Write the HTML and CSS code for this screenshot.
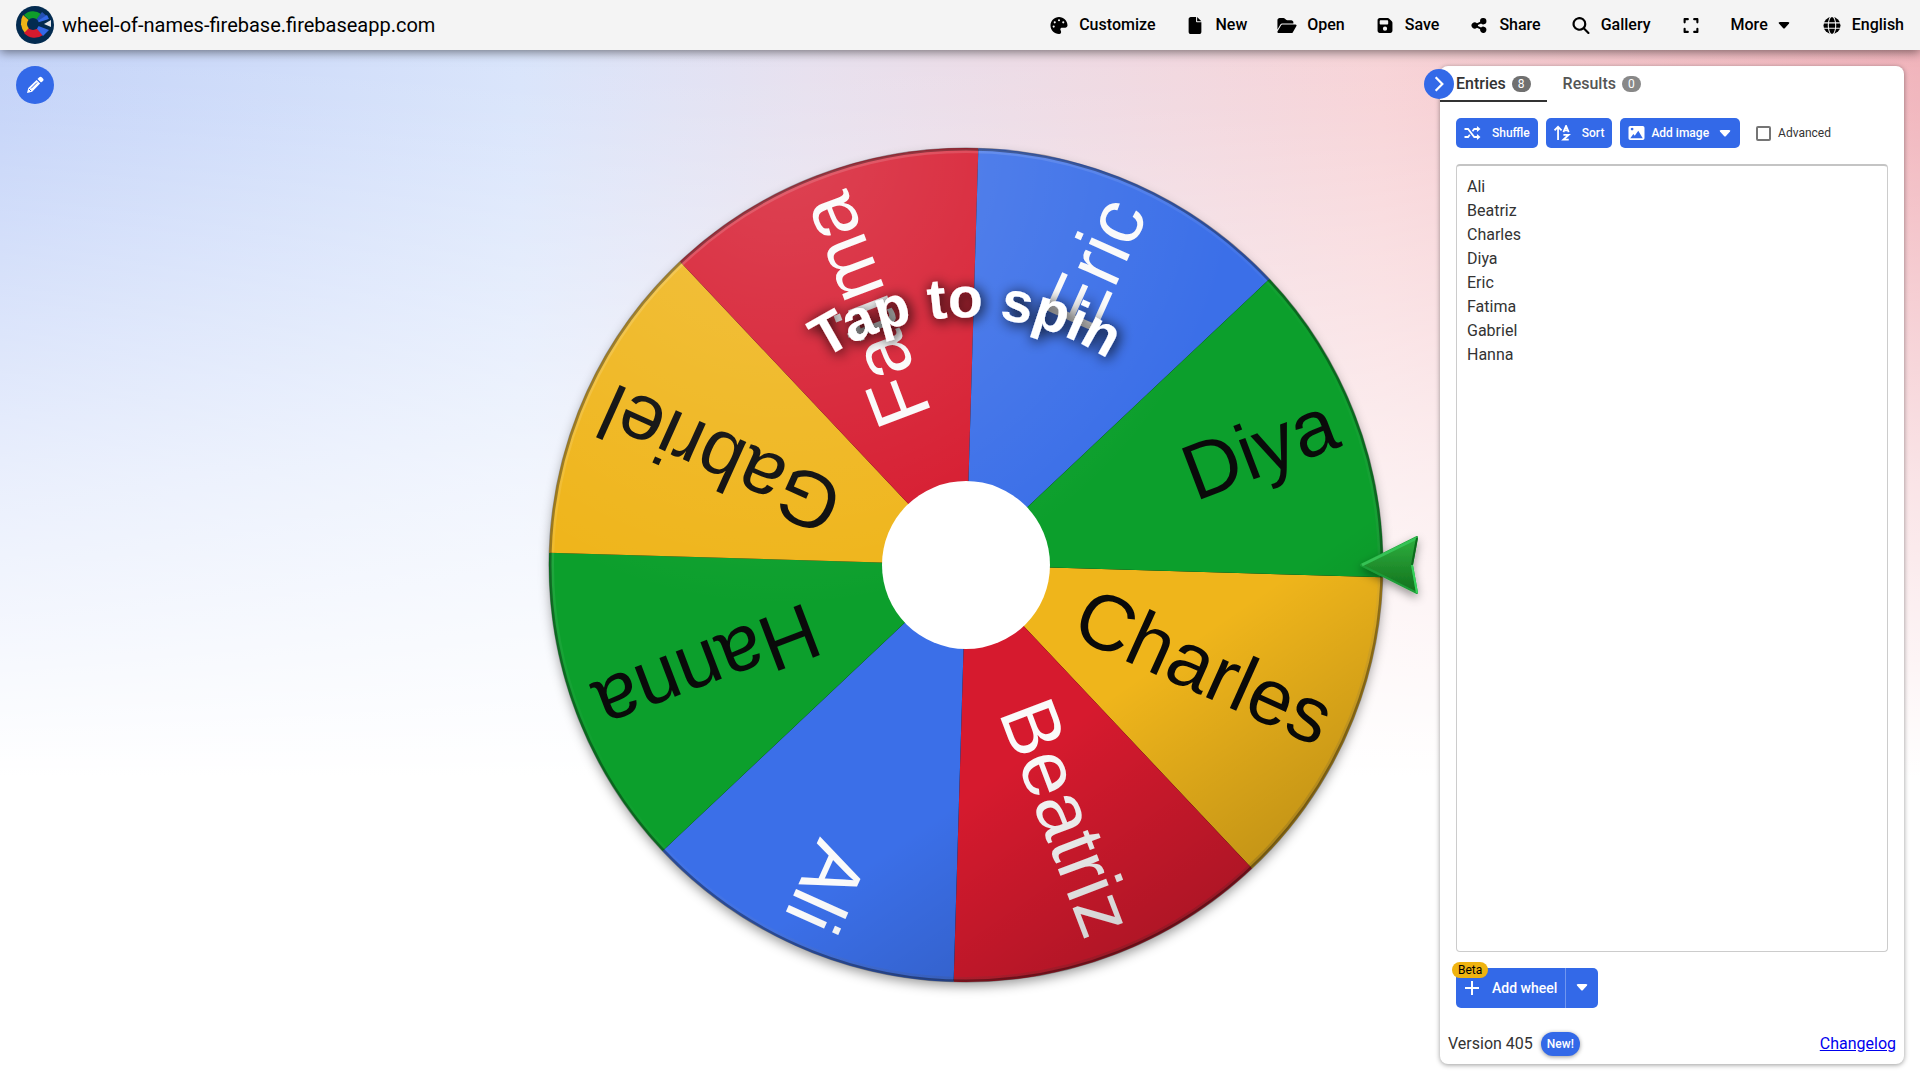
FILE: index.html
```html
<!DOCTYPE html>
<html lang="en">
<head>
  <meta charset="UTF-8">
  <meta name="viewport" content="width=device-width, initial-scale=1.0">
  <title>Wheel of Names</title>
  <link rel="stylesheet" href="styles.css">
</head>
<body>
  <header class="toolbar">
    <a class="brand" href="#">
      <svg class="logo" viewBox="0 0 38 38" aria-hidden="true">
        <circle cx="19" cy="19" r="19" fill="#032b50"/>
        <path d="M17 18 L8 9 A13 13 0 0 1 25 8 Z" fill="#0f9d2a"/>
        <path d="M17 18 L9 27 A15 15 0 0 1 7 9 Z" fill="#efb417"/>
        <path d="M17 18 L8 27 A14 14 0 0 0 27 29 Z" fill="#d61a2e"/>
        <path d="M17 18 L26 6 L32 11 Z" fill="#2450b5"/>
        <path d="M17 18 L31 9 L33 13 Z" fill="#3369e8"/>
        <path d="M17 18 L33 24 L27 30 Z" fill="#3369e8"/>
        <circle cx="17" cy="18" r="6" fill="#032b50"/>
        <path d="M24 18 L35 12 V24 Z" fill="#032b50"/>
        <path d="M28 18 L35 14 V21 Z" fill="#e4e6ea"/>
      </svg>
      <span>wheel-of-names-firebase.firebaseapp.com</span>
    </a>
    <nav class="menu">
      <button class="menu-btn" type="button">
        <svg class="icon" viewBox="0 0 512 512"><path d="M512 256c0 .9 0 1.800 0 2.700c-.4 36.500-33.600 61.300-70.100 61.300H344c-26.500 0-48 21.500-48 48c0 3.400 .4 6.700 1 9.900c2.100 10.200 6.500 20 10.800 29.900c6.100 13.800 12.100 27.500 12.100 42c0 31.800-21.600 60.700-53.400 62c-3.500 .1-7 .2-10.600 .2C114.600 512 0 397.400 0 256S114.600 0 256 0S512 114.600 512 256zM128 288a32 32 0 1 0-64 0 32 32 0 1 0 64 0zm0-96a32 32 0 1 0 0-64 32 32 0 1 0 0 64zM288 96a32 32 0 1 0-64 0 32 32 0 1 0 64 0zm96 96a32 32 0 1 0 0-64 32 32 0 1 0 0 64z"/></svg>
        Customize
      </button>
      <button class="menu-btn" type="button">
        <svg class="icon" viewBox="0 0 384 512"><path d="M0 64C0 29 29 0 64 0H224V128c0 18 14 32 32 32H384V448c0 35-29 64-64 64H64c-35 0-64-29-64-64V64zM384 128H256V0L384 128z"/></svg>
        New
      </button>
      <button class="menu-btn" type="button">
        <svg class="icon" viewBox="0 0 576 512"><path d="M88 224 0 376V96c0-35 29-64 64-64h118c17 0 33 7 45 19l26 26c12 12 28 19 45 19h118c35 0 64 29 64 64v32H144c-23 0-44 12-56 32zm28 16c6-10 16-16 28-16h400c12 0 22 6 28 16s6 22 0 32L460 464c-6 10-16 16-28 16H32c-12 0-22-6-28-16s-6-22 0-32z"/></svg>
        Open
      </button>
      <button class="menu-btn" type="button">
        <svg class="icon" viewBox="0 0 448 512"><path fill-rule="evenodd" d="M64 32C29 32 0 61 0 96v320c0 35 29 64 64 64h320c35 0 64-29 64-64V174c0-17-7-33-19-45l-78-78c-12-12-28-19-45-19zm0 96c0-18 14-32 32-32h192c18 0 32 14 32 32v64c0 18-14 32-32 32H96c-18 0-32-14-32-32zM224 288a64 64 0 1 1 0 128 64 64 0 0 1 0-128z"/></svg>
        Save
      </button>
      <button class="menu-btn" type="button">
        <svg class="icon" viewBox="0 0 448 512"><path d="M352 224a96 96 0 1 0-95-84l-94 47a96 96 0 1 0 0 138l94 47a96 96 0 1 0 29-57l-94-47a96 96 0 0 0 0-24l94-47c17 17 40 27 66 27z"/></svg>
        Share
      </button>
      <button class="menu-btn" type="button">
        <svg class="icon" viewBox="0 0 512 512"><path d="M416 208c0 46-15 88-40 123l127 126c12 13 12 33 0 46s-33 12-46 0L331 376a208 208 0 1 1 85-168zM208 352a144 144 0 1 0 0-288 144 144 0 1 0 0 288z"/></svg>
        Gallery
      </button>
      <button class="menu-btn" type="button" aria-label="Fullscreen">
        <svg class="icon" viewBox="0 0 448 512"><path d="M32 32C14 32 0 46 0 64v96a32 32 0 0 0 64 0V96h64a32 32 0 0 0 0-64zM64 352a32 32 0 0 0-64 0v96c0 18 14 32 32 32h96a32 32 0 0 0 0-64H64zM320 32a32 32 0 0 0 0 64h64v64a32 32 0 0 0 64 0V64c0-18-14-32-32-32zM448 352a32 32 0 0 0-64 0v64h-64a32 32 0 0 0 0 64h96c18 0 32-14 32-32z"/></svg>
      </button>
      <button class="menu-btn menu-more" type="button">
        More
        <svg class="caret" viewBox="0 0 20 16"><path d="M6 5h8q2 0 1 1.500l-4 4.500q-1 1-2 0l-4-4.500Q4 5 6 5z"/></svg>
      </button>
      <button class="menu-btn" type="button">
        <svg class="icon" viewBox="0 0 16 16"><circle cx="8" cy="8" r="8"/><g fill="none" stroke="#f4f4f4"><ellipse cx="8" cy="8" rx="3.500" ry="8.500"/><path d="M0 5.500h16M0 10.500h16"/></g></svg>
        English
      </button>
    </nav>
  </header>

  <main class="page">
    <button class="round-btn edit-btn" type="button" aria-label="Edit title">
      <svg viewBox="0 0 18 18"><path d="M11.500 3 13 1.500a2 2 0 0 1 3 0l.7.7a2 2 0 0 1 0 3L15 6.500zM10.600 4l3.500 3.500-8 8.200L1 17l1.300-5z"/><path d="M5 12.500 11 6.500M3 13l2 2" stroke="#3369e8" fill="none"/></svg>
    </button>

    <section class="stage">
      <svg class="wheel" viewBox="-458 -458 916 916" role="img" aria-label="Tap to spin">
        <defs>
          <radialGradient id="light" cx="0.280" cy="0" r="0.550">
            <stop offset="0" stop-color="#fff" stop-opacity="0.180"/>
            <stop offset="1" stop-color="#fff" stop-opacity="0"/>
          </radialGradient>
          <linearGradient id="shade" x1="0.250" y1="0.100" x2="0.800" y2="0.900">
            <stop offset="0.720" stop-color="#000" stop-opacity="0"/>
            <stop offset="1" stop-color="#000" stop-opacity="0.180"/>
          </linearGradient>
          <linearGradient id="rim" x1="0.200" y1="0" x2="0.800" y2="1">
            <stop offset="0" stop-color="#fff" stop-opacity="0.180"/>
            <stop offset="0.500" stop-color="#fff" stop-opacity="0"/>
            <stop offset="1" stop-color="#000" stop-opacity="0.200"/>
          </linearGradient>
          <linearGradient id="arrow" x1="0" y1="0" x2="0" y2="1">
            <stop offset="0" stop-color="#2fb03f"/>
            <stop offset="1" stop-color="#11701c"/>
          </linearGradient>
          <filter id="drop" x="-10%" y="-10%" width="120%" height="120%">
            <feDropShadow dx="0" dy="5" stdDeviation="6" flood-color="#000" flood-opacity="0.400"/>
          </filter>
          <filter id="arrow-drop" x="-50%" y="-50%" width="200%" height="200%">
            <feDropShadow dx="0" dy="4" stdDeviation="5" flood-color="#000" flood-opacity="0.400"/>
          </filter>
          <filter id="text-drop" x="-20%" y="-30%" width="140%" height="160%">
            <feDropShadow dx="2" dy="2" stdDeviation="7" flood-color="#000" flood-opacity="1"/>
          </filter>
          <path id="slice" d="M0 0H417A417 417 0 0 1 294.900 294.900Z"/>
          <path id="arc" d="M-258 -20A260 260 0 0 1 258 -20"/>
        </defs>
        <circle r="416" filter="url(#drop)"/>
        <g transform="rotate(1.700)">
          <use href="#slice" fill="#efb51b"/>
          <use href="#slice" fill="#d61a2e" transform="rotate(45)"/>
          <use href="#slice" fill="#3b6fe8" transform="rotate(90)"/>
          <use href="#slice" fill="#0c9f2c" transform="rotate(135)"/>
          <use href="#slice" fill="#efb51b" transform="rotate(180)"/>
          <use href="#slice" fill="#d61a2e" transform="rotate(225)"/>
          <use href="#slice" fill="#3b6fe8" transform="rotate(270)"/>
          <use href="#slice" fill="#0c9f2c" transform="rotate(315)"/>
        </g>
        <g class="names">
          <text class="dark" x="395" dy="0.280em" transform="rotate(24.200)">Charles</text>
          <text x="395" dy="0.280em" transform="rotate(69.200)">Beatriz</text>
          <text x="395" dy="0.280em" transform="rotate(114.200)">Ali</text>
          <text class="dark" x="395" dy="0.280em" transform="rotate(159.200)">Hanna</text>
          <text class="dark" x="395" dy="0.280em" transform="rotate(204.200)">Gabriel</text>
          <text x="395" dy="0.280em" transform="rotate(249.200)">Fatima</text>
          <text x="395" dy="0.280em" transform="rotate(294.200)">Eric</text>
          <text class="dark" x="395" dy="0.280em" transform="rotate(339.200)">Diya</text>
        </g>
        <circle r="417" fill="url(#light)"/>
        <circle r="417" fill="url(#shade)"/>
        <circle r="414" fill="none" stroke="url(#rim)" stroke-width="4"/>
        <circle r="416" fill="none" stroke="#000" stroke-opacity="0.350" stroke-width="3"/>
        <circle r="84" fill="#fff"/>
        <g filter="url(#text-drop)">
          <text class="tap"><textPath href="#arc" startOffset="50%">Tap to spin</textPath></text>
        </g>
        <g filter="url(#arrow-drop)">
          <path d="M395 0 451 -28 446 0 451 28Z" fill="url(#arrow)" stroke="#1f9c38" stroke-width="2" stroke-linejoin="round"/>
          <path d="M396 0 451 -27" stroke="#35c254" stroke-width="3"/>
          <path d="M451 -27 446 0" stroke="#0c6a1c" stroke-width="2"/>
          <path d="M446 0 451 28" stroke="#35d25a" stroke-width="2"/>
        </g>
      </svg>
    </section>

    <aside class="panel">
      <button class="round-btn collapse-btn" type="button" aria-label="Hide panel">
        <svg viewBox="0 0 18 18"><path d="M6 3l6 6-6 6" fill="none" stroke="#fff" stroke-width="2"/></svg>
      </button>
      <div class="tabs" role="tablist">
        <button class="tab active" type="button" role="tab">Entries <span class="count">8</span></button>
        <button class="tab" type="button" role="tab">Results <span class="count">0</span></button>
      </div>
      <div class="actions">
        <button class="btn" type="button">
          <svg class="btn-icon" viewBox="0 0 18 18" fill="none" stroke="#fff" stroke-width="2"><path d="M0 4.500h4l7 9h4M0 13.500h4l2-2.500M9 7l2-2.500h4"/><path d="M14 1l4 3.500L14 8zM14 10l4 3.500L14 17z" fill="#fff" stroke="none"/></svg>
          Shuffle
        </button>
        <button class="btn" type="button">
          <svg class="btn-icon" viewBox="0 0 18 18" fill="none" stroke="#fff" stroke-width="2"><path d="M4 17V2M0 6l4-4 4 4M10 8l3-7 3 7M11 6h4M10 11h6l-6 5.500h6"/></svg>
          Sort
        </button>
        <button class="btn btn-image" type="button">
          <svg class="btn-icon" viewBox="0 0 18 18"><path fill="#fff" fill-rule="evenodd" d="M2 1h14q2 0 2 2v12q0 2-2 2H2q-2 0-2-2V3q0-2 2-2zm2 2a1.500 1.500 0 1 0 .1 0zM2 15h14l-5-8.500L7 12 5.500 10z"/></svg>
          Add image
          <svg class="caret" viewBox="0 0 20 16"><path d="M6 5h8q2 0 1 1.500l-4 4.500q-1 1-2 0l-4-4.500Q4 5 6 5z"/></svg>
        </button>
        <label class="advanced"><input type="checkbox"> Advanced</label>
      </div>
      <textarea class="entries" aria-label="Entries" spellcheck="false">Ali
Beatriz
Charles
Diya
Eric
Fatima
Gabriel
Hanna</textarea>
      <div class="add-wheel">
        <button class="add-btn" type="button">
          <svg class="plus" viewBox="0 0 16 16"><path d="M8 1v14M1 8h14" stroke="#fff" stroke-width="2"/></svg>
          Add wheel
        </button>
        <button class="add-more" type="button" aria-label="More wheels">
          <svg class="caret" viewBox="0 0 20 16"><path d="M6 5h8q2 0 1 1.500l-4 4.500q-1 1-2 0l-4-4.500Q4 5 6 5z"/></svg>
        </button>
        <span class="beta">Beta</span>
      </div>
      <footer class="version">
        <span>Version 405</span>
        <span class="new">New!</span>
        <a href="#">Changelog</a>
      </footer>
    </aside>
  </main>
</body>
</html>
```

FILE: styles.css
```css
* {
  box-sizing: border-box;
}
body {
  margin: 0;
  min-height: 100vh;
  display: flex;
  flex-direction: column;
  font-family: Roboto, sans-serif;
  font-size: 16px;
  line-height: 24px;
  color: #333;
  background:
    linear-gradient(to bottom, rgba(255, 255, 255, 0) 0, rgba(255, 255, 255, 0.1) 10%, rgba(255, 255, 255, 0.65) 44%, #fff 72%),
    linear-gradient(to right, #c1d1f8 0, #d7e3fb 27%, #e6dfee 42%, #f7d1d5 72%, #f0b0b8 100%);
}
button {
  border: 0;
  padding: 0;
  font: inherit;
  font-weight: 500;
  background: none;
  cursor: pointer;
}
.toolbar {
  height: 50px;
  padding: 0 16px;
  display: flex;
  align-items: center;
  justify-content: space-between;
  background: #f4f4f4;
  box-shadow: 0 2px 10px rgba(0, 0, 0, 0.5);
  color: #000;
  z-index: 1;
}
.brand {
  display: flex;
  align-items: center;
  gap: 8px;
  font-size: 20px;
  color: #000;
  text-decoration: none;
}
.logo {
  width: 38px;
  height: 38px;
}
.menu {
  display: flex;
  gap: 28px;
}
.menu-btn {
  display: flex;
  align-items: center;
  gap: 8px;
  color: #000;
}
.menu-more {
  gap: 6px;
  margin-right: -2px;
}
.icon {
  width: 24px;
  height: 17px;
}
.caret {
  width: 20px;
  height: 16px;
  fill: currentColor;
}
.page {
  flex: 1;
  display: flex;
  align-items: stretch;
  padding: 16px;
  gap: 16px;
}
.round-btn {
  display: flex;
  align-items: center;
  justify-content: center;
  border-radius: 50%;
  background: #3369e8;
}
.round-btn svg {
  width: 18px;
  height: 18px;
  fill: #fff;
}
.edit-btn {
  width: 38px;
  height: 38px;
}
.stage {
  flex: 1;
  display: flex;
  align-items: center;
  justify-content: flex-end;
}
.wheel {
  width: 916px;
  max-width: 100%;
  overflow: visible;
}
.names text {
  font-family: "Liberation Sans", sans-serif;
  font-size: 79px;
  text-anchor: end;
  fill: #fafafa;
}
.names .dark {
  fill: #0a0a0a;
}
.tap {
  font-family: "Liberation Sans", sans-serif;
  font-size: 57px;
  font-weight: bold;
  text-anchor: middle;
  fill: #fff;
}
.panel {
  position: relative;
  width: 464px;
  display: flex;
  flex-direction: column;
  background: #fff;
  border-radius: 8px;
  box-shadow: 0 1px 5px rgba(0, 0, 0, 0.4);
}
.collapse-btn {
  position: absolute;
  left: -16px;
  top: 3px;
  width: 30px;
  height: 30px;
}
.collapse-btn svg {
  width: 20px;
  height: 20px;
}
.tabs {
  display: flex;
}
.tab {
  height: 36px;
  padding: 2px 16px 0;
  display: flex;
  align-items: center;
  gap: 6px;
  color: #555;
  border-bottom: 2px solid transparent;
}
.tab.active {
  color: #333;
  border-color: #333;
}
.count {
  padding: 0 6px;
  border-radius: 8px;
  font-size: 12px;
  font-weight: 400;
  line-height: 16px;
  color: #fff;
  background: #888;
}
.active .count {
  background: #707070;
}
.actions {
  display: flex;
  align-items: center;
  gap: 8px;
  padding: 16px;
}
.btn {
  height: 30px;
  padding: 0 8px;
  display: flex;
  align-items: center;
  gap: 11px;
  border-radius: 5px;
  background: #3369e8;
  color: #fff;
  font-size: 12px;
}
.btn-image {
  gap: 6px;
  padding-right: 5px;
}
.btn-icon {
  width: 17px;
  height: 16px;
}
.plus {
  width: 16px;
  height: 16px;
}
.advanced {
  display: flex;
  align-items: center;
  gap: 7px;
  padding-left: 8px;
  font-size: 12px;
}
.advanced input {
  appearance: none;
  width: 15px;
  height: 15px;
  margin: 0;
  border: 2px solid #757575;
  border-radius: 2px;
}
.entries {
  flex: 1;
  margin: 0 16px;
  padding: 9px 10px;
  border: 1px solid #ccc;
  border-top: 2px solid #c4c4c4;
  border-radius: 4px;
  outline: 0;
  resize: none;
  font: inherit;
  color: #333;
}
.add-wheel {
  position: relative;
  align-self: flex-start;
  display: flex;
  margin: 16px;
  height: 40px;
  border-radius: 5px;
  background: #3369e8;
}
.add-btn {
  display: flex;
  align-items: center;
  gap: 12px;
  padding: 0 8px;
  font-size: 14px;
  color: #fff;
}
.add-more {
  padding: 4px 6px 0;
  border-left: 1px solid #7096ef;
  color: #fff;
}
.beta {
  position: absolute;
  left: -4px;
  top: -6px;
  padding: 0 6px;
  border-radius: 8px;
  font-size: 12px;
  line-height: 16px;
  color: #000;
  background: #efb310;
}
.version {
  display: flex;
  align-items: center;
  gap: 8px;
  padding: 8px;
}
.new {
  padding: 0 6px;
  border-radius: 12px;
  font-size: 12px;
  font-weight: 500;
  color: #fff;
  background: #3369e8;
  box-shadow: 0 1px 4px rgba(0, 0, 0, 0.4);
}
.version a {
  margin-left: auto;
  color: #0000ee;
}
```
